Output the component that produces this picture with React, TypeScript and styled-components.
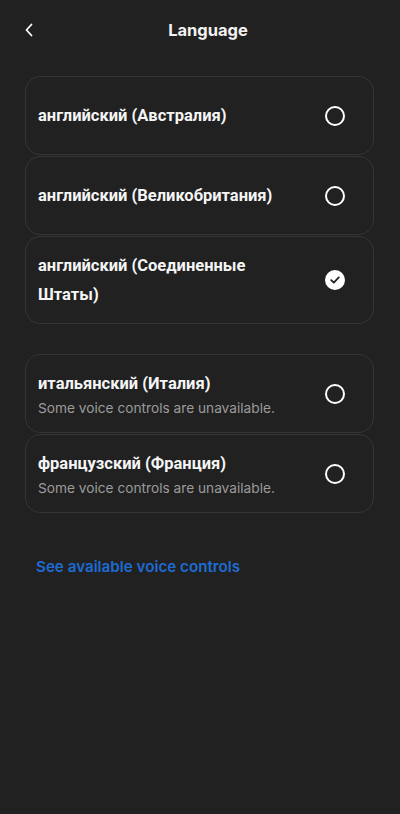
import React from "react";
import styled, { createGlobalStyle } from "styled-components";

const GlobalStyle = createGlobalStyle`
  html, body {
    margin: 0;
    padding: 0;
    background: #212121;
  }
  body {
    font-family: Roboto, "Noto Sans", sans-serif;
    color: #fff;
  }
`;

const Page = styled.div`
  width: 400px;
  min-height: 814px;
  background: #212121;
  display: flex;
  flex-direction: column;
`;

const Header = styled.header`
  height: 60px;
  display: grid;
  grid-template-columns: 60px 1fr 60px;
  align-items: center;
  margin-bottom: 16px;
`;

const BackButton = styled.button`
  background: none;
  border: none;
  padding: 0 0 0 24px;
  height: 30px;
  display: flex;
  align-items: center;
  cursor: pointer;
`;

const Title = styled.h1`
  margin: 0;
  padding-left: 16px;
  text-align: center;
  font-family: Inter, "Noto Sans", sans-serif;
  font-size: 16.5px;
  font-weight: 700;
  color: #f2f2f2;
`;

const List = styled.div`
  display: flex;
  flex-direction: column;
  gap: 1px;
  padding: 0 26px 0 25px;
`;

const Group = styled(List)`
  margin-bottom: 30px;
`;

const Card = styled.div`
  min-height: 79px;
  box-sizing: border-box;
  border: 1px solid #353535;
  border-radius: 15px;
  padding: 14px 28px 14px 12px;
  display: flex;
  align-items: center;
  gap: 26px;
`;

const Text = styled.div`
  flex: 1;
  display: flex;
  flex-direction: column;
`;

const Name = styled.div`
  font-family: Roboto, "Noto Sans", sans-serif;
  font-size: 16.5px;
  font-weight: 700;
  line-height: 29px;
  color: #f5f5f5;
`;

const Note = styled.div`
  font-family: Inter, "Noto Sans", sans-serif;
  font-size: 13.7px;
  line-height: 20px;
  color: #9b9b9b;
`;

const Radio = styled.div<{ $checked: boolean }>`
  width: 20px;
  height: 20px;
  box-sizing: border-box;
  border-radius: 50%;
  border: 2px solid #fff;
  background: ${(p) => (p.$checked ? "#fff" : "transparent")};
  display: flex;
  align-items: center;
  justify-content: center;
  flex-shrink: 0;
`;

const Link = styled.a`
  display: block;
  margin: 44px 0 0 36px;
  font-family: Inter, "Noto Sans", sans-serif;
  font-size: 15.2px;
  font-weight: 600;
  color: #1d6bd3;
  text-decoration: none;
  line-height: 20px;
`;

type Lang = { name: string; note?: string; checked?: boolean };

const first: Lang[] = [
  { name: "английский (Австралия)" },
  { name: "английский (Великобритания)" },
  { name: "английский (Соединенные Штаты)", checked: true },
];

const second: Lang[] = [
  { name: "итальянский (Италия)", note: "Some voice controls are unavailable." },
  { name: "французский (Франция)", note: "Some voice controls are unavailable." },
];

const Row: React.FC<Lang> = ({ name, note, checked }) => (
  <Card>
    <Text>
      <Name>{name}</Name>
      {note && <Note>{note}</Note>}
    </Text>
    <Radio $checked={!!checked}>
      {checked && (
        <svg width="10" height="8" viewBox="0 0 10 8">
          <path
            d="M1.2 4.2 L3.8 6.6 L8.8 1.4"
            fill="none"
            stroke="#212121"
            strokeWidth="1.8"
            strokeLinecap="round"
            strokeLinejoin="round"
          />
        </svg>
      )}
    </Radio>
  </Card>
);

export default function App() {
  return (
    <Page>
      <GlobalStyle />
      <Header>
        <BackButton aria-label="Back">
          <svg width="10" height="14" viewBox="0 0 10 14">
            <path
              d="M7.5 1.5 L2.5 7 L7.5 12.5"
              fill="none"
              stroke="#fff"
              strokeWidth="1.8"
              strokeLinecap="round"
              strokeLinejoin="round"
            />
          </svg>
        </BackButton>
        <Title>Language</Title>
        <div />
      </Header>
      <Group>
        {first.map((l) => (
          <Row key={l.name} {...l} />
        ))}
      </Group>
      <List>
        {second.map((l) => (
          <Row key={l.name} {...l} />
        ))}
      </List>
      <Link href="#">See available voice controls</Link>
    </Page>
  );
}
